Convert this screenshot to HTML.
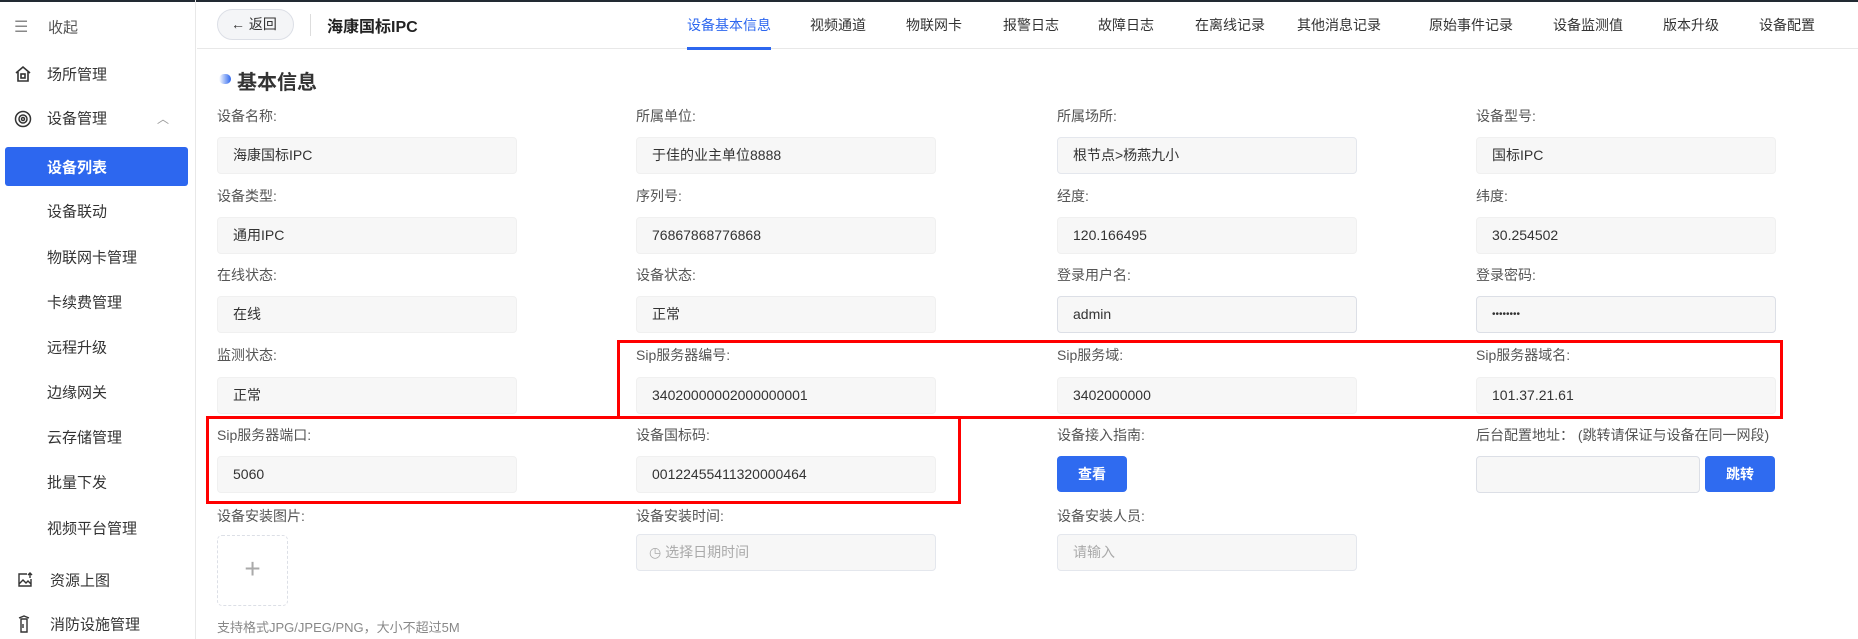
<!DOCTYPE html>
<html><head><meta charset="utf-8"><style>
*{margin:0;padding:0;box-sizing:border-box}
body{width:1858px;height:639px;overflow:hidden;background:#fff;font-family:"Liberation Sans","Noto Sans CJK SC",sans-serif;color:#333;position:relative}
.abs{position:absolute}
.side{left:0;top:0;width:196px;height:639px;border-right:1px solid #e8e8e8}
.si{position:absolute;left:47px;font-size:15px;color:#333;transform:translateY(-50%);white-space:nowrap}
.ic{position:absolute;left:14px;transform:translateY(-50%)}
.tab{position:absolute;top:25px;font-size:14px;color:#333;transform:translate(-50%,-50%);white-space:nowrap}
.lbl{position:absolute;font-size:14px;color:#555;transform:translateY(-50%);white-space:nowrap}
.inp{position:absolute;width:300px;height:37px;background:#f7f7f7;border:1px solid #f0f0f0;border-radius:4px;font-size:14px;color:#333;line-height:35px;padding-left:15px}
.red{position:absolute;border:3px solid #f00}
.btn{position:absolute;background:#2f6bf0;color:#fff;font-size:14px;border-radius:4px;text-align:center;font-weight:bold}
</style></head><body>
<div class="abs" style="left:0;top:0;width:1858px;height:2px;background:#222a33"></div>
<div class="abs side"></div>
<div class="ic" style="top:27px;left:14px;color:#888;font-size:16px">☰</div>
<div class="si" style="top:27px;left:48px;color:#555">收起</div>
<svg class="ic" style="top:74px" width="18" height="18" viewBox="0 0 18 18" fill="none" stroke="#333" stroke-width="1.6"><path d="M2 8L9 2l7 6M4 7v9h10V7"/><rect x="7" y="9" width="4" height="4"/></svg>
<div class="si" style="top:74px">场所管理</div>
<svg class="ic" style="top:119px" width="18" height="18" viewBox="0 0 18 18" fill="none" stroke="#333" stroke-width="1.5"><circle cx="9" cy="9" r="7.5"/><circle cx="9" cy="9" r="4"/><circle cx="9" cy="9" r="1.5"/></svg>
<div class="si" style="top:118px">设备管理</div>
<div class="abs" style="left:157px;top:110px;color:#999;font-size:12px">︿</div>
<div class="abs" style="left:5px;top:147px;width:183px;height:39px;background:#2d67ef;border-radius:3px"></div>
<div class="si" style="top:167px;color:#fff;font-weight:bold">设备列表</div>
<div class="si" style="top:211px">设备联动</div>
<div class="si" style="top:257px">物联网卡管理</div>
<div class="si" style="top:302px">卡续费管理</div>
<div class="si" style="top:347px">远程升级</div>
<div class="si" style="top:392px">边缘网关</div>
<div class="si" style="top:437px">云存储管理</div>
<div class="si" style="top:482px">批量下发</div>
<div class="si" style="top:528px">视频平台管理</div>
<svg class="ic" style="top:580px;left:17px" width="16" height="16" viewBox="0 0 16 16" fill="none" stroke="#333" stroke-width="1.4"><path d="M10 2H2v12h12V7"/><path d="M2 12l4-4 3 3 2-2 3 3"/><path d="M13 1v5M11 3l2-2 2 2"/></svg>
<div class="si" style="top:580px;left:50px">资源上图</div>
<svg class="ic" style="top:624px;left:17px" width="14" height="18" viewBox="0 0 14 18" fill="none" stroke="#333" stroke-width="1.4"><path d="M4 4h6v13H4zM2 3l5-2 5 2M6 9v4"/></svg>
<div class="si" style="top:624px;left:50px">消防设施管理</div>

<div class="abs" style="left:197px;top:48px;width:1661px;height:1px;background:#e8e8e8"></div>
<div class="abs" style="left:217px;top:9px;width:77px;height:31px;border:1px solid #dcdfe6;border-radius:16px;background:#f4f5f7;font-size:14px;line-height:29px;padding-left:13px">← 返回</div>
<div class="abs" style="left:310px;top:14px;width:1px;height:22px;background:#ddd"></div>
<div class="abs" style="left:327px;top:13px;font-size:16px;font-weight:bold;color:#222">海康国标IPC</div>
<div class="tab" style="left:729px;color:#2d67ef">设备基本信息</div>
<div class="abs" style="left:687px;top:47px;width:84px;height:3px;background:#2d67ef"></div>
<div class="tab" style="left:838px">视频通道</div>
<div class="tab" style="left:934px">物联网卡</div>
<div class="tab" style="left:1031px">报警日志</div>
<div class="tab" style="left:1126px">故障日志</div>
<div class="tab" style="left:1230px">在离线记录</div>
<div class="tab" style="left:1339px">其他消息记录</div>
<div class="tab" style="left:1471px">原始事件记录</div>
<div class="tab" style="left:1588px">设备监测值</div>
<div class="tab" style="left:1691px">版本升级</div>
<div class="tab" style="left:1787px">设备配置</div>

<div class="abs" style="left:219px;top:74px;width:12px;height:10px;border-radius:5px;background:linear-gradient(90deg,#fff,#2d67ef)"></div>
<div class="abs" style="left:237px;top:66px;font-size:20px;font-weight:bold;color:#333">基本信息</div>

<div class="lbl" style="left:217px;top:116px">设备名称:</div><div class="inp" style="left:217px;top:137px">海康国标IPC</div>
<div class="lbl" style="left:636px;top:116px">所属单位:</div><div class="inp" style="left:636px;top:137px">于佳的业主单位8888</div>
<div class="lbl" style="left:1057px;top:116px">所属场所:</div><div class="inp" style="left:1057px;top:137px;border-color:#e4e7ed">根节点&gt;杨燕九小</div>
<div class="lbl" style="left:1476px;top:116px">设备型号:</div><div class="inp" style="left:1476px;top:137px">国标IPC</div>

<div class="lbl" style="left:217px;top:196px">设备类型:</div><div class="inp" style="left:217px;top:217px">通用IPC</div>
<div class="lbl" style="left:636px;top:196px">序列号:</div><div class="inp" style="left:636px;top:217px">76867868776868</div>
<div class="lbl" style="left:1057px;top:196px">经度:</div><div class="inp" style="left:1057px;top:217px">120.166495</div>
<div class="lbl" style="left:1476px;top:196px">纬度:</div><div class="inp" style="left:1476px;top:217px">30.254502</div>

<div class="lbl" style="left:217px;top:275px">在线状态:</div><div class="inp" style="left:217px;top:296px">在线</div>
<div class="lbl" style="left:636px;top:275px">设备状态:</div><div class="inp" style="left:636px;top:296px">正常</div>
<div class="lbl" style="left:1057px;top:275px">登录用户名:</div><div class="inp" style="left:1057px;top:296px;border-color:#dcdfe6">admin</div>
<div class="lbl" style="left:1476px;top:275px">登录密码:</div><div class="inp" style="left:1476px;top:296px;border-color:#dcdfe6;font-size:10px">••••••••</div>

<div class="lbl" style="left:217px;top:355px">监测状态:</div><div class="inp" style="left:217px;top:377px">正常</div>
<div class="lbl" style="left:636px;top:355px">Sip服务器编号:</div><div class="inp" style="left:636px;top:377px">34020000002000000001</div>
<div class="lbl" style="left:1057px;top:355px">Sip服务域:</div><div class="inp" style="left:1057px;top:377px">3402000000</div>
<div class="lbl" style="left:1476px;top:355px">Sip服务器域名:</div><div class="inp" style="left:1476px;top:377px">101.37.21.61</div>

<div class="lbl" style="left:217px;top:435px">Sip服务器端口:</div><div class="inp" style="left:217px;top:456px">5060</div>
<div class="lbl" style="left:636px;top:435px">设备国标码:</div><div class="inp" style="left:636px;top:456px">00122455411320000464</div>
<div class="lbl" style="left:1057px;top:435px">设备接入指南:</div><div class="btn" style="left:1057px;top:456px;width:70px;height:36px;line-height:36px">查看</div>
<div class="lbl" style="left:1476px;top:435px">后台配置地址： (跳转请保证与设备在同一网段)</div>
<div class="inp" style="left:1476px;top:456px;width:224px;border-color:#dcdfe6"></div>
<div class="btn" style="left:1705px;top:456px;width:70px;height:36px;line-height:36px">跳转</div>

<div class="lbl" style="left:217px;top:516px">设备安装图片:</div>
<div class="abs" style="left:217px;top:535px;width:71px;height:71px;border:1px dashed #dcdfe6;border-radius:5px;text-align:center;line-height:66px;font-size:28px;color:#aaa;font-weight:200">+</div>
<div class="abs" style="left:217px;top:617px;font-size:13px;color:#888">支持格式JPG/JPEG/PNG，大小不超过5M</div>
<div class="lbl" style="left:636px;top:516px">设备安装时间:</div>
<div class="inp" style="left:636px;top:534px;border-color:#e4e7ed;color:#aaa;padding-left:12px">◷ 选择日期时间</div>
<div class="lbl" style="left:1057px;top:516px">设备安装人员:</div>
<div class="inp" style="left:1057px;top:534px;border-color:#e4e7ed;color:#aaa">请输入</div>

<div class="red" style="left:617px;top:340px;width:1166px;height:79px"></div>
<div class="red" style="left:206px;top:416px;width:755px;height:88px"></div>
</body></html>
